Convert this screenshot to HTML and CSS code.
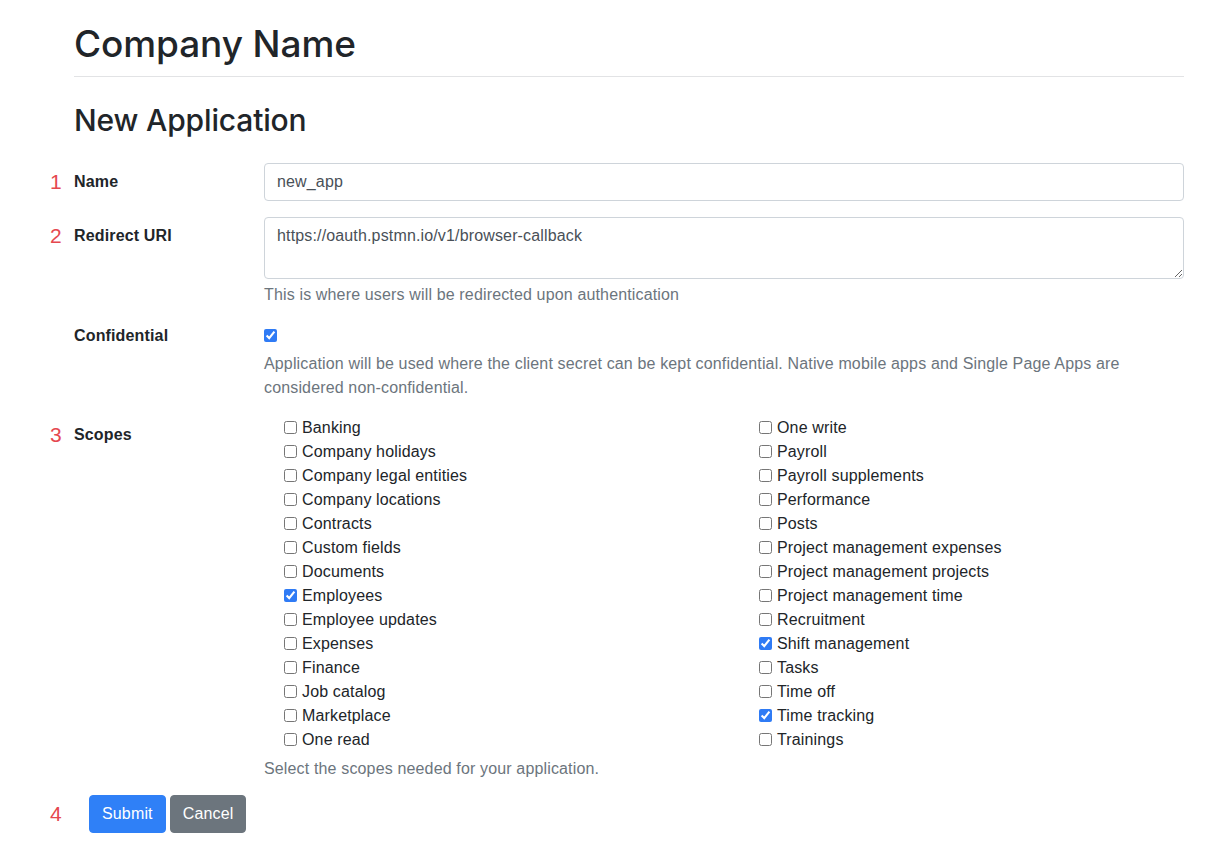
FILE: index.html
```html
<!DOCTYPE html>
<html lang="en">
<head>
    <meta charset="UTF-8">
    <meta name="viewport" content="width=device-width, initial-scale=1.0">
    <title>New Application</title>
    <link rel="stylesheet" href="styles.css">
</head>
<body>
    <div class="page">
        <h1 class="brand">Company Name</h1>
        <hr class="divider">
        <h2 class="page-title">New Application</h2>

        <form class="app-form">
            <div class="form-row">
                <span class="step">1</span>
                <label class="form-label" for="app-name">Name</label>
                <div class="form-field">
                    <input type="text" id="app-name" class="form-control" value="new_app">
                </div>
            </div>

            <div class="form-row">
                <span class="step">2</span>
                <label class="form-label" for="redirect-uri">Redirect URI</label>
                <div class="form-field">
                    <textarea id="redirect-uri" class="form-control textarea" rows="2">https://oauth.pstmn.io/v1/browser-callback</textarea>
                    <div class="form-text">This is where users will be redirected upon authentication</div>
                </div>
            </div>

            <div class="form-row">
                <label class="form-label no-pad" for="confidential">Confidential</label>
                <div class="form-field">
                    <div class="single-check">
                        <input type="checkbox" id="confidential" checked>
                    </div>
                    <div class="form-text">Application will be used where the client secret can be kept confidential. Native mobile apps and Single Page Apps are considered non-confidential.</div>
                </div>
            </div>

            <div class="form-row last">
                <span class="step">3</span>
                <label class="form-label">Scopes</label>
                <div class="form-field">
                    <div class="scopes">
                        <div class="scope-col">
                            <label class="scope"><input type="checkbox">Banking</label>
                            <label class="scope"><input type="checkbox">Company holidays</label>
                            <label class="scope"><input type="checkbox">Company legal entities</label>
                            <label class="scope"><input type="checkbox">Company locations</label>
                            <label class="scope"><input type="checkbox">Contracts</label>
                            <label class="scope"><input type="checkbox">Custom fields</label>
                            <label class="scope"><input type="checkbox">Documents</label>
                            <label class="scope"><input type="checkbox" checked>Employees</label>
                            <label class="scope"><input type="checkbox">Employee updates</label>
                            <label class="scope"><input type="checkbox">Expenses</label>
                            <label class="scope"><input type="checkbox">Finance</label>
                            <label class="scope"><input type="checkbox">Job catalog</label>
                            <label class="scope"><input type="checkbox">Marketplace</label>
                            <label class="scope"><input type="checkbox">One read</label>
                        </div>
                        <div class="scope-col">
                            <label class="scope"><input type="checkbox">One write</label>
                            <label class="scope"><input type="checkbox">Payroll</label>
                            <label class="scope"><input type="checkbox">Payroll supplements</label>
                            <label class="scope"><input type="checkbox">Performance</label>
                            <label class="scope"><input type="checkbox">Posts</label>
                            <label class="scope"><input type="checkbox">Project management expenses</label>
                            <label class="scope"><input type="checkbox">Project management projects</label>
                            <label class="scope"><input type="checkbox">Project management time</label>
                            <label class="scope"><input type="checkbox">Recruitment</label>
                            <label class="scope"><input type="checkbox" checked>Shift management</label>
                            <label class="scope"><input type="checkbox">Tasks</label>
                            <label class="scope"><input type="checkbox">Time off</label>
                            <label class="scope"><input type="checkbox" checked>Time tracking</label>
                            <label class="scope"><input type="checkbox">Trainings</label>
                        </div>
                    </div>
                    <div class="form-text scopes-help">Select the scopes needed for your application.</div>
                </div>
            </div>

            <div class="form-actions">
                <span class="step">4</span>
                <button type="submit" class="btn btn-primary">Submit</button>
                <button type="button" class="btn btn-secondary">Cancel</button>
            </div>
        </form>
    </div>
</body>
</html>
```

FILE: styles.css
```css
body {
    margin: 0;
    font-family: "Liberation Sans", Arial, sans-serif;
    font-size: 16px;
    line-height: 24px;
    letter-spacing: 0.15px;
    color: #212529;
    background-color: #fff;
}
.page {
    padding: 22px 43px 0 74px;
}
.brand {
    margin: 0;
    font-family: Inter, "Liberation Sans", sans-serif;
    font-size: 37px;
    font-weight: 500;
    line-height: 1.2;
    letter-spacing: -0.1px;
}
.divider {
    margin: 10px 0 0;
    border: 0;
    border-top: 1px solid #e2e3e5;
}
.page-title {
    margin: 25px 0 0;
    font-family: Inter, "Liberation Sans", sans-serif;
    font-size: 30px;
    font-weight: 500;
    line-height: 1.2;
    letter-spacing: -0.15px;
}
.app-form {
    margin-top: 25px;
}
.form-row {
    position: relative;
    display: flex;
    margin-bottom: 16px;
}
.form-row.last {
    margin-bottom: 0;
}
.form-label {
    width: 190px;
    flex-shrink: 0;
    padding-top: 7px;
    font-weight: bold;
}
.form-label.no-pad {
    padding-top: 1px;
}
.form-field {
    flex-grow: 1;
}
.step {
    position: absolute;
    left: -24px;
    top: 7px;
    font-size: 21px;
    line-height: 24px;
    color: #e5484f;
}
.form-control {
    display: block;
    width: 100%;
    box-sizing: border-box;
    height: 38px;
    padding: 6px 12px;
    font-family: inherit;
    font-size: 16px;
    line-height: 24px;
    letter-spacing: 0.15px;
    color: #495057;
    background-color: #fff;
    border: 1px solid #ced4da;
    border-radius: 4px;
    margin: 0;
}
.textarea {
    height: 62px;
    resize: vertical;
}
.form-text {
    margin-top: 4px;
    color: #6c757d;
}
.scopes-help {
    margin-top: 5px;
}
.single-check {
    height: 25px;
    box-sizing: border-box;
    padding-top: 6px;
}
input[type="checkbox"] {
    width: 13px;
    height: 13px;
    margin: 0;
    accent-color: #2f7bf5;
}
.single-check input {
    display: block;
}
.scopes {
    display: grid;
    grid-template-columns: 475px 1fr;
}
.scope-col {
    display: flex;
    flex-direction: column;
    padding-left: 20px;
}
.scope {
    display: flex;
    align-items: center;
    gap: 5px;
    height: 24px;
}
.scope input {
    margin-bottom: 2px;
}
.form-actions {
    position: relative;
    display: flex;
    gap: 4px;
    margin-top: 14px;
    padding-left: 15px;
}
.btn {
    height: 38px;
    padding: 6px 12px;
    font-family: inherit;
    font-size: 16px;
    line-height: 24px;
    letter-spacing: 0.15px;
    color: #fff;
    border: 1px solid transparent;
    border-radius: 4px;
    cursor: pointer;
}
.btn-primary {
    background-color: #2f80f7;
    border-color: #2f80f7;
}
.btn-secondary {
    background-color: #6c757d;
    border-color: #6c757d;
}
```
